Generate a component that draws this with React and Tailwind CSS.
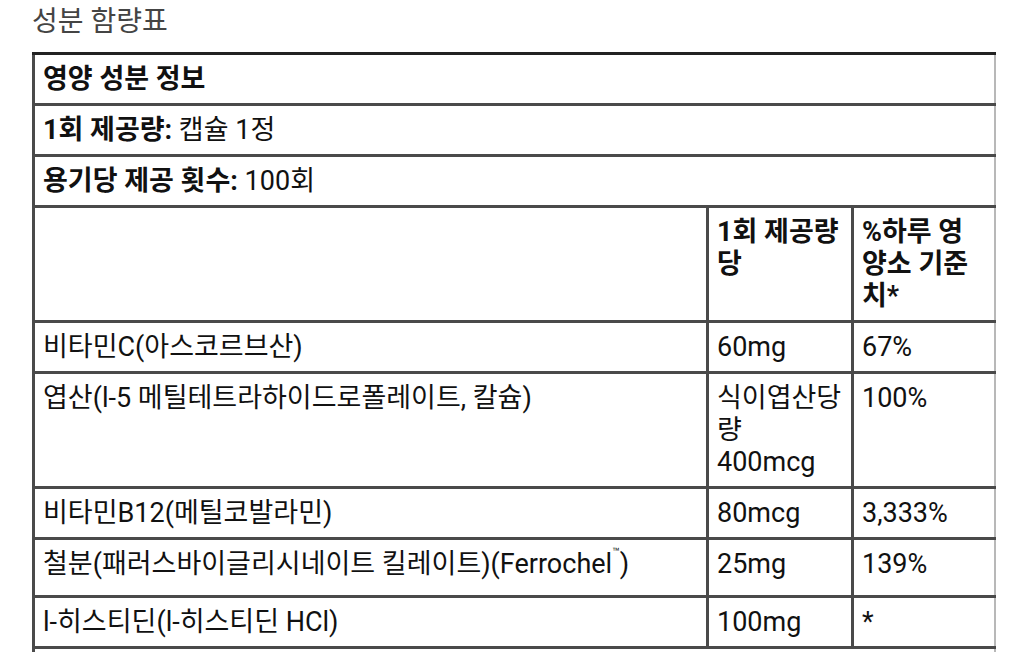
import React from 'react';

const rows = [
  { name: '비타민C(아스코르브산)', amount: '60mg', dv: '67%' },
  { name: '엽산(l-5 메틸테트라하이드로폴레이트, 칼슘)', amount: '식이엽산당량 400mcg', dv: '100%' },
  { name: '비타민B12(메틸코발라민)', amount: '80mcg', dv: '3,333%' },
  {
    name: (
      <>
        철분(패러스바이글리시네이트 킬레이트)(Ferrochel<sup className="text-[12px] align-[11px]">™</sup>)
      </>
    ),
    amount: '25mg',
    dv: '139%',
    extra: ' pb-[15px]',
  },
  { name: 'l-히스티딘(l-히스티딘 HCl)', amount: '100mg', dv: '*' },
];

const cell = 'border-[3px] border-[#4a4a4a] px-2 py-2 align-top text-left';
const lastCell = 'border-[3px] border-r-2 border-[#4a4a4a] border-r-[#b8b8b8] px-2 py-2 align-top text-left';

const App = () => {
  return (
    <div
      className="bg-white min-h-screen pl-8 text-[#111] text-[27px] leading-[32px]"
      style={{ fontFamily: 'Roboto, "Noto Sans CJK KR", sans-serif' }}
    >
      <h2 className="text-[28px] leading-[44px] font-normal text-[#444] mb-[8px]">성분 함량표</h2>

      <table className="table-fixed border-collapse w-[961px]">
        <colgroup>
          <col className="w-[674px]" />
          <col className="w-[145px]" />
          <col className="w-[142px]" />
        </colgroup>
        <tbody>
          <tr>
            <td colSpan={3} className={lastCell + ' border-t-[#222] font-bold'}>
              영양 성분 정보
            </td>
          </tr>
          <tr>
            <td colSpan={3} className={lastCell}>
              <span className="font-bold">1회 제공량:</span> 캡슐 1정
            </td>
          </tr>
          <tr>
            <td colSpan={3} className={lastCell}>
              <span className="font-bold">용기당 제공 횟수:</span> 100회
            </td>
          </tr>
          <tr>
            <th className={cell}></th>
            <th className={cell + ' font-bold'}>1회 제공량당</th>
            <th className={lastCell + ' font-bold'}>%하루 영양소 기준치*</th>
          </tr>
          {rows.map((r, i) => (
            <tr key={i}>
              <td className={cell + (r.extra || '')}>{r.name}</td>
              <td className={cell + (r.extra || '')}>{r.amount}</td>
              <td className={lastCell + (r.extra || '')}>{r.dv}</td>
            </tr>
          ))}
          <tr>
            <td colSpan={3} className={lastCell + ' h-[48px]'}></td>
          </tr>
        </tbody>
      </table>
    </div>
  );
};

export default App;
